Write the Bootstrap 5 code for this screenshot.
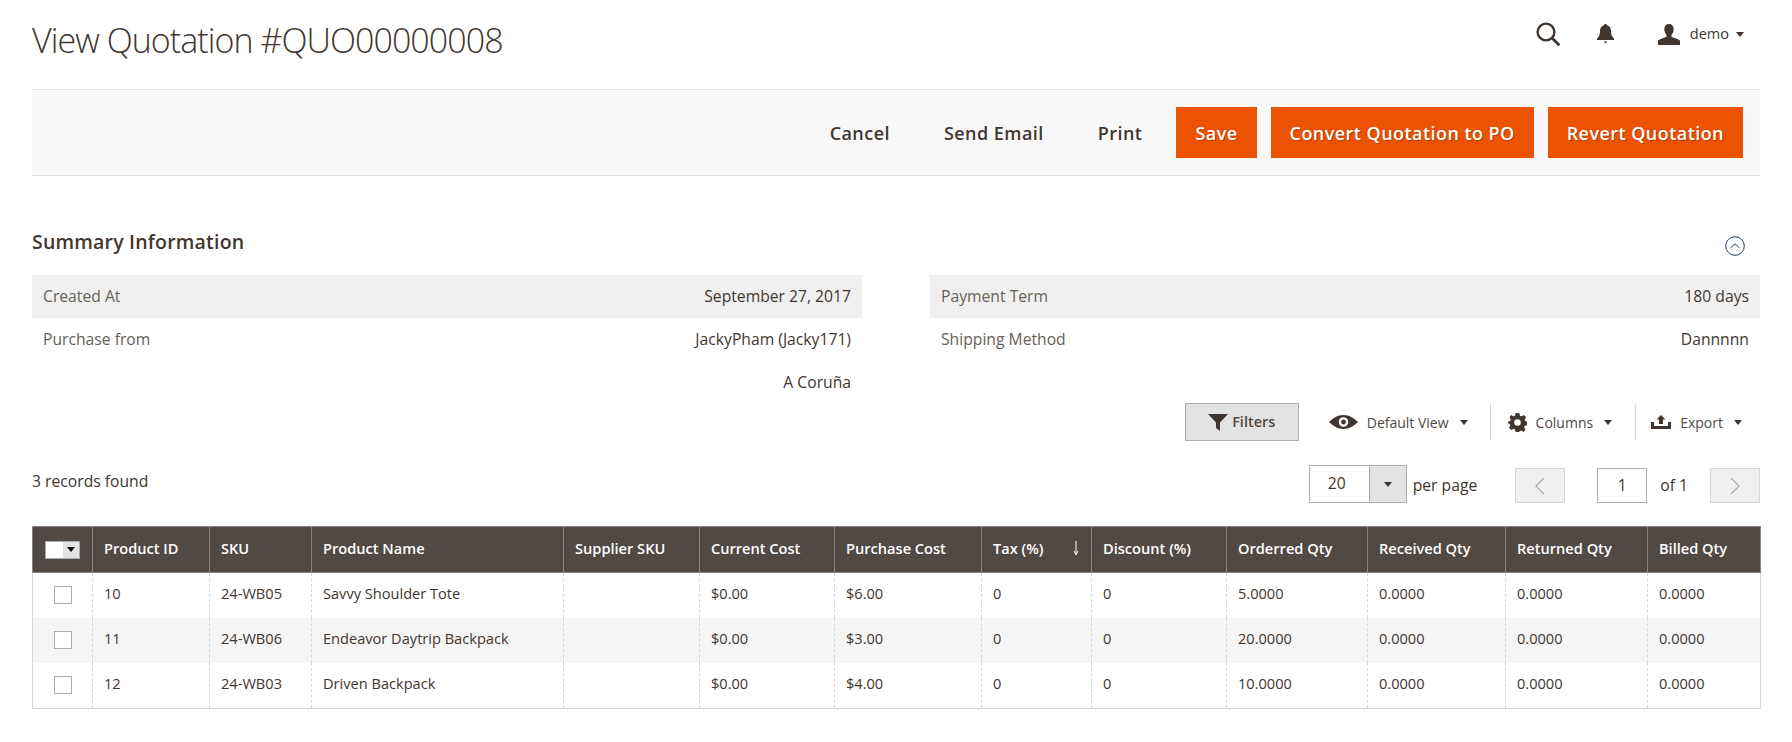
<!DOCTYPE html>
<html lang="en">
<head>
  <meta charset="UTF-8">
  <title>View Quotation #QUO00000008</title>
  <link href="https://cdn.jsdelivr.net/npm/bootstrap@5.3.3/dist/css/bootstrap.min.css" rel="stylesheet">
  <style>
    body { font-family: "Open Sans", "Liberation Sans", sans-serif; color: #41362f; font-size: 15.7px; background: #fff; }
    .page-wrap { padding: 0 32px; }

    .top-head { height: 89px; }
    .page-name { font-size: 34px; letter-spacing: -.95px; font-weight: 300; line-height: 42px; margin: 0; color: #41362f; padding-top: 19px; }
    .top-tools { padding-top: 22px; padding-right: 16px; }
    .user-name { font-size: 14.5px; color: #41362f; margin-left: 10px; margin-right: 7px; }
    .bell-icon { margin-left: 37px; }
    .user-icon { margin-left: 44px; }
    .caret-down { width: 0; height: 0; border-left: 4.5px solid transparent; border-right: 4.5px solid transparent; border-top: 5px solid #41362f; display: inline-block; }

    .action-bar { height: 87px; background: #f8f8f8; border-top: 1px solid #e3e3e3; border-bottom: 1px solid #e3e3e3; padding-right: 17px; gap: 14px; }
    .act-link { font-size: 18px; font-weight: 600; letter-spacing: .025em; color: #41362f; background: none; border: 0; padding: 1px 20px 0; height: 51px; border-radius: 0; }
    .act-main { font-size: 18px; font-weight: 600; letter-spacing: .025em; color: #fff; background: #eb5202; border: 0; padding: 1px 19px 0; height: 51px; border-radius: 0; text-shadow: 1px 1px 0 rgba(0,0,0,.25); }
    .act-main:hover { background: #eb5202; color: #fff; }

    .summary-head { margin-top: 50px; height: 32px; padding-right: 15px; }
    .summary-title { font-size: 19.5px; font-weight: 600; margin: 0; letter-spacing: .01em; }
    .fold-icon { margin-top: 8px; }
    .info-cols { margin-top: 17px; gap: 68px; }
    .info-rows { flex: 1 1 0; }
    .info-line { height: 43px; padding: 0 11px; color: #41362f; }
    .info-line.tint { background: #f0f0f0; }
    .info-label { color: #676056; }

    .grid-tools { margin-top: -1px; height: 38px; padding-right: 18px; }
    .filter-btn { width: 114px; height: 38px; background: #e3e3e3; border: 1px solid #adadad; border-radius: 0; font-size: 14.5px; font-weight: 600; color: #514943; padding: 0; }
    .tool-item { font-size: 14px; color: #514943; height: 36px; padding: 0 23px 0 17px; border-left: 1px solid #d6d6d6; }
    .tool-item.first { border-left: 0; padding-left: 30px; padding-right: 22px; }
    .tool-item.last { padding: 0 0 0 15px; }
    .tool-text { margin: 0 11px 0 9px; }

    .pager-row { margin-top: 24px; }
    .records { margin-bottom: 4px; color: #41362f; }
    .page-size { width: 98px; height: 38px; border: 1px solid #adadad; background: #fff; }
    .page-size-val { flex: 1; padding-left: 18px; }
    .page-size-btn { width: 37px; height: 100%; background: #e3e3e3; border-left: 1px solid #adadad; }
    .pager-text { line-height: 35px; height: 35px; }
    .per-page { margin: 0 38px 0 6px; }
    .page-of { margin-right: 22px; }
    .pager-arrow { width: 50px; height: 35px; background: #f0f0f0; border: 1px solid #d6d6d6; }
    .page-num { width: 50px; height: 35px; border: 1px solid #adadad; background: #fff; margin: 0 13px 0 32px; }

    .data-grid { table-layout: fixed; width: 1728px; margin: 23px 0 0; border-collapse: collapse; font-size: 14.6px; }
    .data-grid th { background: #514943; color: #fff; font-weight: 600; height: 46px; padding: 0 11px 2px; border: 1px solid #8a837f; vertical-align: middle; position: relative; white-space: nowrap; }
    .data-grid td { height: 45px; padding: 0 11px 2px; border-left: 1px dashed #d6d6d6; border-right: 1px dashed #d6d6d6; border-top: 0; border-bottom: 0; vertical-align: middle; color: #41362f; background: transparent; box-shadow: none; }
    .data-grid tr.tint td { background: #f5f5f5; }
    .data-grid tbody tr:last-child td { border-bottom: 1px solid #d6d6d6; height: 46px; }
    .data-grid td:first-child { border-left: 1px solid #d6d6d6; }
    .data-grid td:last-child { border-right: 1px solid #d6d6d6; }
    .id-cell { color: #4a3338 !important; }
    .row-check { width: 18px; height: 18px; border: 1px solid #adadad; background: #fff; display: block; margin: 2px auto 0; }
    .head-check { width: 35px; height: 18px; border: 1px solid #adadad; background: #e3e3e3; margin: 2px auto 0; }
    .head-check-box { width: 17px; height: 100%; background: #fff; }
    .sort-mark { position: absolute; right: 10px; top: 11px; }
    .data-grid .caret-down { border-top-color: #111; }
  </style>
</head>
<body>
  <div class="page-wrap">
    <!-- title and user tools -->
    <div class="top-head d-flex justify-content-between align-items-start">
      <h1 class="page-name">View Quotation #QUO00000008</h1>
      <div class="top-tools d-flex align-items-center">
        <svg width="24" height="24" viewBox="0 0 24 24" fill="none" stroke="#41362f" stroke-width="2.4"><circle cx="10" cy="10" r="8.400"/><path d="M16 16 23.300 23.300" stroke-width="2.800"/></svg>
        <svg class="bell-icon" width="17" height="20" viewBox="0 0 17 20" fill="#41362f"><path d="M8.500 0c.9 0 1.500.5 1.600 1.300C12.600 2 14 4 14 7.500c0 3 .8 5.300 3 7v1.500H0v-1.500c2.200-1.700 3-4 3-7C3 4 4.400 2 6.900 1.300 7 .5 7.600 0 8.500 0z"/><path d="M7 17.500h3a1.500 1.500 0 0 1-3 0z"/></svg>
        <svg class="user-icon" width="22" height="21" viewBox="0 0 22 21" fill="#41362f"><path d="M11 0c3 0 4.700 2.100 4.700 5 0 2.400-.8 4.500-2.200 5.800v1.900c1.700 1 5.900 1.900 8.500 3.800V21H0v-4.500c2.600-1.900 6.800-2.800 8.500-3.800v-1.900C7.100 9.500 6.300 7.400 6.300 5 6.300 2.100 8 0 11 0z"/></svg>
        <span class="user-name">demo</span>
        <span class="caret-down"></span>
      </div>
    </div>

    <!-- page actions -->
    <div class="action-bar d-flex justify-content-end align-items-center">
      <button class="btn act-link" type="button">Cancel</button>
      <button class="btn act-link" type="button">Send Email</button>
      <button class="btn act-link" type="button">Print</button>
      <button class="btn act-main" type="button">Save</button>
      <button class="btn act-main" type="button">Convert Quotation to PO</button>
      <button class="btn act-main" type="button">Revert Quotation</button>
    </div>

    <!-- summary -->
    <div class="summary-head d-flex justify-content-between align-items-center">
      <h2 class="summary-title">Summary Information</h2>
      <svg class="fold-icon" width="20" height="20" viewBox="0 0 20 20" fill="none" stroke="#1f3d5c" stroke-width="1"><circle cx="10" cy="10" r="9.300"/><path d="M5.500 12 10 7.800 14.500 12"/></svg>
    </div>
    <div class="info-cols d-flex">
      <div class="info-rows">
        <div class="info-line tint d-flex justify-content-between align-items-center"><span class="info-label">Created At</span><span>September 27, 2017</span></div>
        <div class="info-line d-flex justify-content-between align-items-center"><span class="info-label">Purchase from</span><span>JackyPham (Jacky171)</span></div>
        <div class="info-line d-flex justify-content-end align-items-center"><span>A Coruña</span></div>
      </div>
      <div class="info-rows">
        <div class="info-line tint d-flex justify-content-between align-items-center"><span class="info-label">Payment Term</span><span>180 days</span></div>
        <div class="info-line d-flex justify-content-between align-items-center"><span class="info-label">Shipping Method</span><span>Dannnnn</span></div>
      </div>
    </div>

    <!-- grid toolbar -->
    <div class="grid-tools d-flex justify-content-end align-items-center">
      <button class="btn filter-btn d-flex align-items-center justify-content-center gap-1" type="button">
        <svg width="20" height="17" viewBox="0 0 20 17" fill="#41362f"><path d="M0 0h20L12 8.500V17l-4-3V8.500z"/></svg>Filters
      </button>
      <div class="tool-item first d-flex align-items-center">
        <svg width="29" height="14" viewBox="0 0 29 14"><path fill="#41362f" fill-rule="evenodd" d="M14.500 0c6 0 11 3.500 14.500 7-3.500 3.500-8.500 7-14.500 7S3.500 10.500 0 7c3.500-3.500 8.500-7 14.500-7zm0 2.200a4.800 4.800 0 1 0 0 9.600 4.800 4.800 0 0 0 0-9.600z"/><circle cx="14.500" cy="7" r="2.400" fill="#41362f"/></svg>
        <span class="tool-text">Default View</span><span class="caret-down"></span>
      </div>
      <div class="tool-item d-flex align-items-center">
        <svg width="19" height="19" viewBox="0 0 20 20"><path fill="#41362f" fill-rule="evenodd" d="M8 0h4l.6 2.800 1.700.7L16.700 2 19 4.400l-1.500 2.400.7 1.700 1.800.7v3.600l-2.400.7-.6 1.700 1.500 2.400-2.300 2.400-2.400-1.500-1.700.7L12 20H8l-.6-2.700-1.700-.7L3.300 18 1 15.600l1.500-2.400-.7-1.700L0 10.800V9.200l2.400-.7.6-1.700L1.500 4.400 3.300 2l2.400 1.500 1.700-.7zM10 6.500a3.500 3.500 0 1 0 0 7 3.500 3.500 0 0 0 0-7z"/></svg>
        <span class="tool-text">Columns</span><span class="caret-down"></span>
      </div>
      <div class="tool-item last d-flex align-items-center">
        <svg width="20" height="14" viewBox="0 0 20 14" fill="#41362f"><path d="M10 0l4.500 4.500H12V9H8V4.500H5.500z"/><path d="M0 7h3v4h14V7h3v7H0z"/></svg>
        <span class="tool-text">Export</span><span class="caret-down"></span>
      </div>
    </div>

    <!-- pager -->
    <div class="pager-row d-flex justify-content-between align-items-center">
      <div class="records">3 records found</div>
      <div class="d-flex align-items-end">
        <div class="page-size d-flex align-items-center">
          <span class="page-size-val">20</span>
          <span class="page-size-btn d-flex align-items-center justify-content-center"><span class="caret-down"></span></span>
        </div>
        <span class="pager-text per-page">per page</span>
        <div class="pager-arrow d-flex align-items-center justify-content-center">
          <svg width="10" height="18" viewBox="0 0 10 18" fill="none" stroke="#adadad" stroke-width="1.300"><path d="M9 1 1 9l8 8"/></svg>
        </div>
        <div class="page-num d-flex align-items-center justify-content-center">1</div>
        <span class="pager-text page-of">of 1</span>
        <div class="pager-arrow d-flex align-items-center justify-content-center">
          <svg width="10" height="18" viewBox="0 0 10 18" fill="none" stroke="#adadad" stroke-width="1.300"><path d="m1 1 8 8-8 8"/></svg>
        </div>
      </div>
    </div>

    <!-- items grid -->
    <table class="table data-grid">
      <colgroup>
        <col width="60"><col width="117"><col width="102"><col width="252"><col width="136"><col width="135"><col width="147"><col width="110"><col width="135"><col width="141"><col width="138"><col width="142"><col width="113">
      </colgroup>
      <thead>
        <tr>
          <th><div class="head-check d-flex"><span class="head-check-box"></span><span class="flex-fill d-flex align-items-center justify-content-center"><span class="caret-down"></span></span></div></th>
          <th>Product ID</th>
          <th>SKU</th>
          <th>Product Name</th>
          <th>Supplier SKU</th>
          <th>Current Cost</th>
          <th>Purchase Cost</th>
          <th>Tax (%)<svg class="sort-mark" width="10" height="20" viewBox="0 0 10 20" fill="none" stroke="#fff"><path d="M5 3v13M3 13l2 4 2-4"/></svg></th>
          <th>Discount (%)</th>
          <th>Orderred Qty</th>
          <th>Received Qty</th>
          <th>Returned Qty</th>
          <th>Billed Qty</th>
        </tr>
      </thead>
      <tbody>
        <tr>
          <td><span class="row-check"></span></td><td class="id-cell">10</td><td>24-WB05</td><td>Savvy Shoulder Tote</td><td></td><td>$0.00</td><td>$6.00</td><td>0</td><td>0</td><td>5.0000</td><td>0.0000</td><td>0.0000</td><td>0.0000</td>
        </tr>
        <tr class="tint">
          <td><span class="row-check"></span></td><td class="id-cell">11</td><td>24-WB06</td><td>Endeavor Daytrip Backpack</td><td></td><td>$0.00</td><td>$3.00</td><td>0</td><td>0</td><td>20.0000</td><td>0.0000</td><td>0.0000</td><td>0.0000</td>
        </tr>
        <tr>
          <td><span class="row-check"></span></td><td class="id-cell">12</td><td>24-WB03</td><td>Driven Backpack</td><td></td><td>$0.00</td><td>$4.00</td><td>0</td><td>0</td><td>10.0000</td><td>0.0000</td><td>0.0000</td><td>0.0000</td>
        </tr>
      </tbody>
    </table>
  </div>
  <script src="https://cdn.jsdelivr.net/npm/bootstrap@5.3.3/dist/js/bootstrap.bundle.min.js"></script>
</body>
</html>
